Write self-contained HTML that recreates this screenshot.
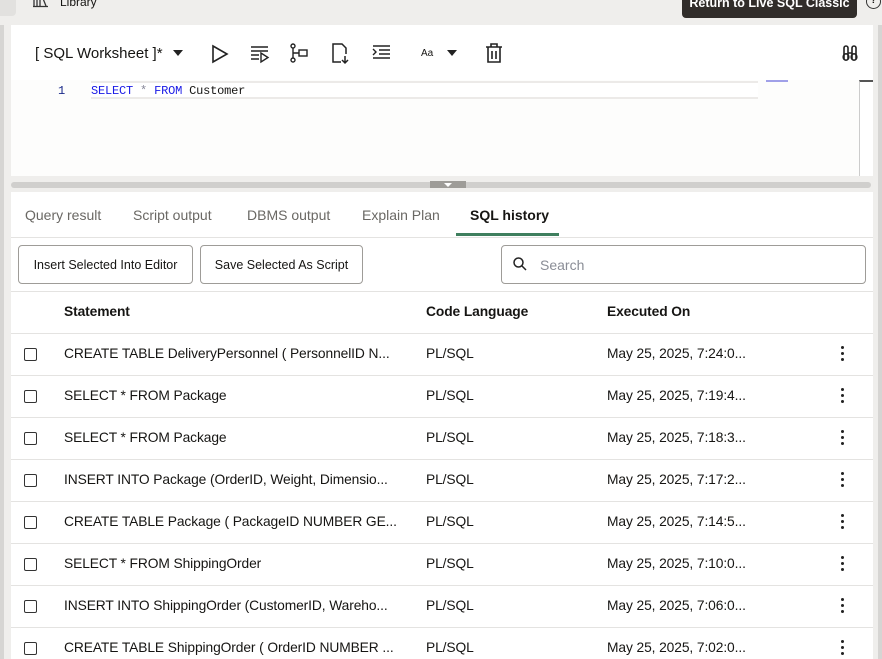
<!DOCTYPE html>
<html><head><style>
*{box-sizing:border-box;margin:0;padding:0}
html,body{width:882px;height:659px;overflow:hidden}
body{background:#efeeec;font-family:"Liberation Sans",sans-serif;color:#161513;position:relative}
.abs{position:absolute}
.panel{left:11px;top:25px;width:862px;height:634px;background:#fff}
.tab{position:absolute;top:207px;font-size:14px;color:#6a6864}
.btn{position:absolute;top:245px;height:39px;border:1px solid #9e9c98;border-radius:4px;font-size:12.5px;display:flex;align-items:center;justify-content:center;background:#fff}
.row{position:absolute;left:11px;width:862px;height:42px;border-top:1px solid #e4e3e1;font-size:13.8px;overflow:hidden}
.row span{position:absolute;top:12px;letter-spacing:-0.1px}
.cb{position:absolute;left:13px;top:14px;width:13px;height:13px;border:1.5px solid #333;border-radius:2px}
.dots{position:absolute;left:830px;top:12px;width:4px}
.dots i{display:block;width:3px;height:3px;background:#222;border-radius:50%;margin-bottom:3px}
</style></head><body>
<div class="abs" style="left:0;top:0;width:16px;height:16px;background:#e2e1df;border-radius:0 0 4px 0"></div>
<svg class="abs" style="left:33px;top:-4px" width="16" height="12"><path d="M1 0v10M4 0v10M7 0v10M9 0l4 10M0 10.5h15" stroke="#333" stroke-width="1.3" fill="none"/></svg>
<div class="abs" style="left:60px;top:-5px;font-size:12px">Library</div>
<div class="abs" style="left:682px;top:-8px;width:175px;height:26px;background:#312d2a;border-radius:4px;color:#fff;font-size:12.5px;font-weight:bold;text-align:center;line-height:22px">Return to Live SQL Classic</div>
<div class="abs" style="left:866px;top:-6px;width:15px;height:15px;border:1.5px solid #333;border-radius:50%;font-size:10px;font-weight:bold;text-align:center;line-height:12px">?</div>
<div class="abs" style="left:0;top:25px;width:4px;height:634px;background:#d6d5d3"></div>
<div class="abs" style="left:878px;top:25px;width:4px;height:634px;background:#d6d5d3"></div>
<div class="abs panel"></div>
<div class="abs" style="left:35px;top:45px;font-size:15px">[ SQL Worksheet ]*</div>
<svg class="abs" style="left:172px;top:49px" width="12" height="8"><path d="M1 1h10L6 7z" fill="#222"/></svg>
<svg class="abs" style="left:210px;top:44px" width="20" height="20"><path d="M3 2L17 10L3 18Z" stroke="#222" stroke-width="1.6" fill="none"/></svg>
<svg class="abs" style="left:250px;top:44px" width="20" height="20"><path d="M1 3h17M1 7h17M1 11h8M1 15h8M11 9v9l7-4.5z" stroke="#222" stroke-width="1.4" fill="none"/></svg>
<svg class="abs" style="left:289px;top:43px" width="20" height="20"><circle cx="4" cy="3" r="2" stroke="#222" fill="none" stroke-width="1.4"/><circle cx="4" cy="17" r="2" stroke="#222" fill="none" stroke-width="1.4"/><path d="M4 5v10M4 10h6" stroke="#222" stroke-width="1.4"/><rect x="10" y="7" width="8" height="6" stroke="#222" fill="none" stroke-width="1.4"/></svg>
<svg class="abs" style="left:331px;top:43px" width="20" height="22"><path d="M10 19H2V1h9l4 4v6M14 13v7M11 17l3 3 3-3" stroke="#222" stroke-width="1.5" fill="none"/></svg>
<svg class="abs" style="left:372px;top:44px" width="20" height="18"><path d="M1 2h17M7 6h11M7 10h11M1 14h17M1 5l3 3-3 3" stroke="#222" stroke-width="1.4" fill="none"/></svg>
<div class="abs" style="left:421px;top:48px;font-size:10px">Aa</div>
<svg class="abs" style="left:446px;top:49px" width="12" height="8"><path d="M1 1h10L6 7z" fill="#222"/></svg>
<svg class="abs" style="left:485px;top:43px" width="18" height="20"><path d="M1 4h16M6 4V1h6v3M3 4v15h12V4M7 8v8M11 8v8" stroke="#222" stroke-width="1.6" fill="none"/></svg>
<svg class="abs" style="left:841px;top:44px" width="18" height="18"><path d="M3 15V4a2 2 0 0 1 4 0v11M11 15V4a2 2 0 0 1 4 0v11M7 9h4" stroke="#222" stroke-width="1.6" fill="none"/><ellipse cx="5" cy="13" rx="2.8" ry="3.2" stroke="#222" stroke-width="1.6" fill="none"/><ellipse cx="13" cy="13" rx="2.8" ry="3.2" stroke="#222" stroke-width="1.6" fill="none"/></svg>
<div class="abs" style="left:11px;top:80px;width:848px;height:96px;background:#fdfdfc"></div>
<div class="abs" style="left:91px;top:81px;width:667px;height:18px;border-top:2px solid #eceae8;border-bottom:2px solid #eceae8;background:#fff"></div>
<div class="abs" style="left:58px;top:84px;font-family:'Liberation Mono',monospace;font-size:12px;color:#1a2a8a">1</div>
<div class="abs" style="left:91px;top:84px;font-family:'Liberation Mono',monospace;font-size:12px;letter-spacing:-0.2px;white-space:pre"><span style="color:#1a1ae6">SELECT</span> <span style="color:#889">*</span> <span style="color:#1a1ae6">FROM</span> Customer</div>
<div class="abs" style="left:766px;top:80px;width:22px;height:2px;background:#a0a0e8"></div>
<div class="abs" style="left:859px;top:80px;width:14px;height:96px;border-left:1px solid #ccc;border-top:2px solid #555"></div>
<div class="abs" style="left:11px;top:176px;width:862px;height:16px;background:#efeeec"></div>
<div class="abs" style="left:11px;top:182px;width:860px;height:6px;background:#d0cfcd;border-radius:3px"></div>
<div class="abs" style="left:430px;top:181px;width:36px;height:7px;background:#9e9c98"></div>
<svg class="abs" style="left:444px;top:183px" width="8" height="4"><path d="M0 0h8L4 4z" fill="#fff"/></svg>
<div class="tab" style="left:25px">Query result</div>
<div class="tab" style="left:133px">Script output</div>
<div class="tab" style="left:247px">DBMS output</div>
<div class="tab" style="left:362px">Explain Plan</div>
<div class="tab" style="left:470px;color:#161513;font-weight:600">SQL history</div>
<div class="abs" style="left:456px;top:233px;width:103px;height:3px;background:#3f7f5e"></div>
<div class="abs" style="left:11px;top:237px;width:862px;height:1px;background:#e4e3e1"></div>
<div class="btn" style="left:18px;width:175px">Insert Selected Into Editor</div>
<div class="btn" style="left:200px;width:163px">Save Selected As Script</div>
<div class="abs" style="left:501px;top:245px;width:365px;height:39px;border:1px solid #9e9c98;border-radius:4px"></div>
<svg class="abs" style="left:513px;top:257px" width="14" height="14"><circle cx="5.5" cy="5.5" r="4.5" stroke="#222" stroke-width="1.5" fill="none"/><path d="M9 9l4 4" stroke="#222" stroke-width="1.5"/></svg>
<div class="abs" style="left:540px;top:257px;font-size:14px;color:#8a8d96">Search</div>
<div class="row" style="top:291px;font-weight:600"><span style="left:53px">Statement</span><span style="left:415px">Code Language</span><span style="left:596px">Executed On</span></div>
<div class="row" style="top:333px"><div class="cb"></div><span style="left:53px">CREATE TABLE DeliveryPersonnel ( PersonnelID N...</span><span style="left:415px">PL/SQL</span><span style="left:596px">May 25, 2025, 7:24:0...</span><div class="dots"><i></i><i></i><i></i></div></div>
<div class="row" style="top:375px"><div class="cb"></div><span style="left:53px">SELECT * FROM Package</span><span style="left:415px">PL/SQL</span><span style="left:596px">May 25, 2025, 7:19:4...</span><div class="dots"><i></i><i></i><i></i></div></div>
<div class="row" style="top:417px"><div class="cb"></div><span style="left:53px">SELECT * FROM Package</span><span style="left:415px">PL/SQL</span><span style="left:596px">May 25, 2025, 7:18:3...</span><div class="dots"><i></i><i></i><i></i></div></div>
<div class="row" style="top:459px"><div class="cb"></div><span style="left:53px">INSERT INTO Package (OrderID, Weight, Dimensio...</span><span style="left:415px">PL/SQL</span><span style="left:596px">May 25, 2025, 7:17:2...</span><div class="dots"><i></i><i></i><i></i></div></div>
<div class="row" style="top:501px"><div class="cb"></div><span style="left:53px">CREATE TABLE Package ( PackageID NUMBER GE...</span><span style="left:415px">PL/SQL</span><span style="left:596px">May 25, 2025, 7:14:5...</span><div class="dots"><i></i><i></i><i></i></div></div>
<div class="row" style="top:543px"><div class="cb"></div><span style="left:53px">SELECT * FROM ShippingOrder</span><span style="left:415px">PL/SQL</span><span style="left:596px">May 25, 2025, 7:10:0...</span><div class="dots"><i></i><i></i><i></i></div></div>
<div class="row" style="top:585px"><div class="cb"></div><span style="left:53px">INSERT INTO ShippingOrder (CustomerID, Wareho...</span><span style="left:415px">PL/SQL</span><span style="left:596px">May 25, 2025, 7:06:0...</span><div class="dots"><i></i><i></i><i></i></div></div>
<div class="row" style="top:627px;height:32px"><div class="cb"></div><span style="left:53px">CREATE TABLE ShippingOrder ( OrderID NUMBER ...</span><span style="left:415px">PL/SQL</span><span style="left:596px">May 25, 2025, 7:02:0...</span><div class="dots"><i></i><i></i><i></i></div></div>
</body></html>
